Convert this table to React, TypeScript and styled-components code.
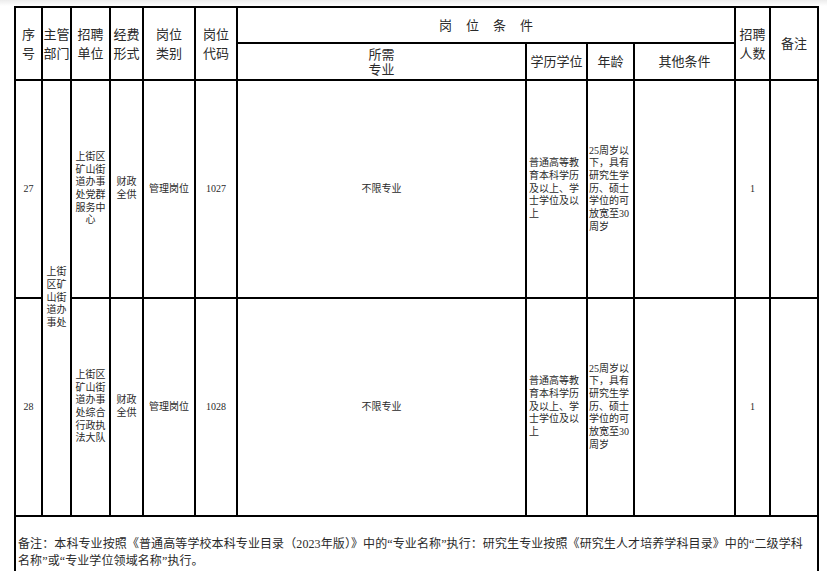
import React from 'react';
import styled, { createGlobalStyle } from 'styled-components';

const Global = createGlobalStyle`
  html, body { margin: 0; padding: 0; background: #fff; overflow: hidden; }
  body { font-family: "Liberation Serif", "Noto Sans CJK SC", serif; color: #2a2a2a; }
`;

const Page = styled.div`
  width: 827px;
  height: 571px;
  box-sizing: border-box;
  padding: 6px 0 0 14px;
  background: linear-gradient(#ececec, #ffffff 6px);
  overflow: hidden;
`;

const Table = styled.table`
  border-collapse: collapse;
  table-layout: fixed;
  width: 803px;
`;

const Row = styled.tr<{ $h: number }>`
  height: ${(p) => p.$h}px;
`;

const Head = styled.th<{ $lh?: number; $spaced?: boolean }>`
  border: 2px solid #000;
  padding: 0;
  font-weight: normal;
  font-size: 13px;
  line-height: ${(p) => p.$lh ?? 19}px;
  text-align: center;
  vertical-align: middle;
  letter-spacing: ${(p) => (p.$spaced ? '14px' : '0')};
  padding-left: ${(p) => (p.$spaced ? '14px' : '0')};
`;

const Cell = styled.td<{ $left?: boolean; $pad?: number }>`
  border: 2px solid #000;
  padding: 0 0 0 ${(p) => p.$pad ?? 0}px;
  font-size: 10px;
  line-height: 12.7px;
  text-align: ${(p) => (p.$left ? 'left' : 'center')};
  vertical-align: middle;
`;

const Note = styled.td`
  border: 2px solid #000;
  padding: 19px 6px 20px 2px;
  font-size: 12px;
  line-height: 17px;
  letter-spacing: 0.1px;
  text-align: left;
  vertical-align: top;
`;

const Line = styled.span`
  display: block;
  white-space: nowrap;
`;

const Lines = ({ items }: { items: string[] }) => (
  <>
    {items.map((t, i) => (
      <Line key={i}>{t}</Line>
    ))}
  </>
);

const widths = [27, 29, 39, 33, 52, 42, 289, 61, 47, 101, 35, 48];

const edu = ['普通高等教', '育本科学历', '及以上、学', '士学位及以', '上'];
const age = ['25周岁以', '下，具有', '研究生学', '历、硕士', '学位的可', '放宽至30', '周岁'];

const rows = [
  {
    no: '27',
    unit: ['上街区', '矿山街', '道办事', '处党群', '服务中', '心'],
    code: '1027',
  },
  {
    no: '28',
    unit: ['上街区', '矿山街', '道办事', '处综合', '行政执', '法大队'],
    code: '1028',
  },
];

export default function App() {
  return (
    <>
      <Global />
      <Page>
        <Table>
          <colgroup>
            {widths.map((w, i) => (
              <col key={i} style={{ width: w }} />
            ))}
          </colgroup>
          <thead>
            <Row $h={36}>
              <Head rowSpan={2}><Lines items={['序', '号']} /></Head>
              <Head rowSpan={2}><Lines items={['主管', '部门']} /></Head>
              <Head rowSpan={2}><Lines items={['招聘', '单位']} /></Head>
              <Head rowSpan={2}><Lines items={['经费', '形式']} /></Head>
              <Head rowSpan={2}><Lines items={['岗位', '类别']} /></Head>
              <Head rowSpan={2}><Lines items={['岗位', '代码']} /></Head>
              <Head colSpan={4} $spaced>岗位条件</Head>
              <Head rowSpan={2}><Lines items={['招聘', '人数']} /></Head>
              <Head rowSpan={2}>备注</Head>
            </Row>
            <Row $h={37}>
              <Head $lh={15}><Lines items={['所需', '专业']} /></Head>
              <Head>学历学位</Head>
              <Head>年龄</Head>
              <Head>其他条件</Head>
            </Row>
          </thead>
          <tbody>
            {rows.map((r, idx) => (
              <Row $h={218} key={r.no}>
                <Cell>{r.no}</Cell>
                {idx === 0 && (
                  <Cell rowSpan={2}>
                    <Lines items={['上街', '区矿', '山街', '道办', '事处']} />
                  </Cell>
                )}
                <Cell><Lines items={r.unit} /></Cell>
                <Cell><Lines items={['财政', '全供']} /></Cell>
                <Cell>管理岗位</Cell>
                <Cell>{r.code}</Cell>
                <Cell>不限专业</Cell>
                <Cell $left $pad={2}><Lines items={edu} /></Cell>
                <Cell $left $pad={1}><Lines items={age} /></Cell>
                <Cell />
                <Cell>1</Cell>
                <Cell />
              </Row>
            ))}
            <tr>
              <Note colSpan={12}>
                备注：本科专业按照《普通高等学校本科专业目录（2023年版）》中的“专业名称”执行：研究生专业按照《研究生人才培养学科目录》中的“二级学科名称”或“专业学位领域名称”执行。
              </Note>
            </tr>
          </tbody>
        </Table>
      </Page>
    </>
  );
}
